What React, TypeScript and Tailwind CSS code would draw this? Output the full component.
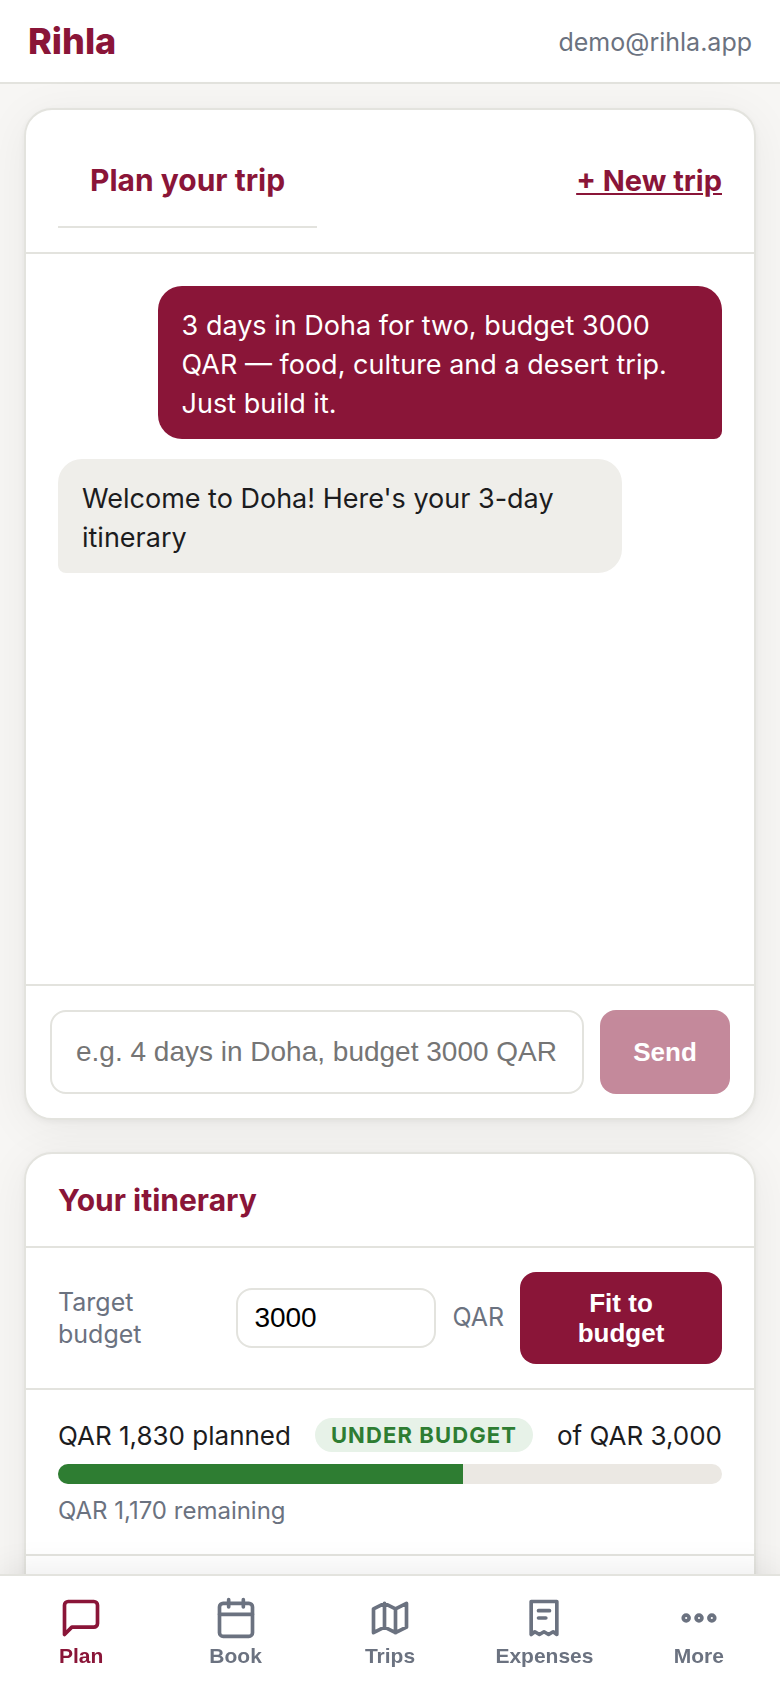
import { useState } from "react";
import type { ReactNode } from "react";

interface Message {
  id: number;
  role: "user" | "assistant";
  text: string;
}

interface Tab {
  id: string;
  label: string;
  icon: ReactNode;
}

const MESSAGES: Message[] = [
  {
    id: 1,
    role: "user",
    text: "3 days in Doha for two, budget 3000 QAR — food, culture and a desert trip. Just build it.",
  },
  { id: 2, role: "assistant", text: "Welcome to Doha! Here's your 3-day itinerary" },
];

const TABS: Tab[] = [
  {
    id: "plan",
    label: "Plan",
    icon: <path d="M21 15a2 2 0 0 1-2 2H7l-4 4V5a2 2 0 0 1 2-2h14a2 2 0 0 1 2 2z" />,
  },
  {
    id: "book",
    label: "Book",
    icon: (
      <>
        <rect x="3" y="4" width="18" height="18" rx="2" />
        <path d="M16 2v4M8 2v4M3 10h18" />
      </>
    ),
  },
  {
    id: "trips",
    label: "Trips",
    icon: <path d="M9 4 3 7v13l6-3 6 3 6-3V4l-6 3-6-3zM9 4v13M15 7v13" />,
  },
  {
    id: "expenses",
    label: "Expenses",
    icon: (
      <path d="M5 3h14v18l-2-1.5-2.5 1.5-2.5-1.5-2.5 1.5L7 19.5 5 21zM9 8h6M9 12h4" />
    ),
  },
  {
    id: "more",
    label: "More",
    icon: (
      <>
        <circle cx="5" cy="12" r="1.6" />
        <circle cx="12" cy="12" r="1.6" />
        <circle cx="19" cy="12" r="1.6" />
      </>
    ),
  },
];

const cardCls =
  "overflow-hidden rounded-[28px] border-2 border-[#e3e3de] bg-white shadow-[0_2px_6px_rgba(0,0,0,0.05),0_8px_48px_rgba(0,0,0,0.06)]";

function Bubble({ message }: { message: Message }) {
  const side =
    message.role === "user"
      ? "self-end rounded-br-lg bg-[#8a1538] text-white"
      : "self-start rounded-bl-lg bg-[#efeeea] text-[#1c1c1e]";
  return (
    <p className={`max-w-[85%] rounded-3xl px-6 pt-5 pb-4 text-[27px] leading-[39px] ${side}`}>
      {message.text}
    </p>
  );
}

function ChatCard() {
  const [draft, setDraft] = useState("");

  return (
    <section className={cardCls}>
      <div className="flex items-center justify-between border-b-2 border-[#e3e3de] px-8 py-6 leading-[44px]">
        <h2 className="border-b-2 border-[#e3e3de] px-8 py-6 text-[30px] font-bold text-[#8a1538]">
          Plan your trip
        </h2>
        <button type="button" className="text-[29px] font-bold text-[#8a1538] underline">
          + New trip
        </button>
      </div>
      <div className="flex min-h-[730px] flex-col gap-5 p-8">
        {MESSAGES.map((m) => (
          <Bubble key={m.id} message={m} />
        ))}
      </div>
      <form
        className="flex gap-4 border-t-2 border-[#e3e3de] p-6 font-['Liberation_Sans',sans-serif]"
        onSubmit={(e) => e.preventDefault()}
      >
        <input
          type="text"
          aria-label="Message"
          placeholder="e.g. 4 days in Doha, budget 3000 QAR"
          value={draft}
          onChange={(e) => setDraft(e.target.value)}
          className="h-[84px] min-w-0 flex-1 rounded-2xl border-2 border-[#e3e3de] px-6 text-[28px] placeholder:text-[#757575]"
        />
        <button
          type="submit"
          disabled={!draft.trim()}
          className="w-[130px] shrink-0 rounded-2xl bg-[#8a1538] text-[26px] font-bold text-white disabled:opacity-50"
        >
          Send
        </button>
      </form>
    </section>
  );
}

function ItineraryCard() {
  const [target, setTarget] = useState("3000");
  const planned = 1830;
  const total = 3000;

  return (
    <section className={cardCls}>
      <h2 className="border-b-2 border-[#e3e3de] px-8 py-6 text-[30px] leading-[44px] font-bold text-[#8a1538]">
        Your itinerary
      </h2>
      <div className="flex items-center gap-4 border-b-2 border-[#e3e3de] px-8 py-6 text-[#6b7280]">
        <label htmlFor="target-budget" className="flex-1 pr-12 text-[25px] leading-8">
          Target budget
        </label>
        <input
          id="target-budget"
          type="text"
          inputMode="numeric"
          value={target}
          onChange={(e) => setTarget(e.target.value)}
          className="h-[60px] w-[200px] rounded-2xl border-2 border-[#e3e3de] px-4 font-['Liberation_Sans',sans-serif] text-[28px] text-black"
        />
        <span className="text-[25px]">QAR</span>
        <button
          type="button"
          className="w-[202px] rounded-2xl bg-[#8a1538] px-10 py-4 font-['Liberation_Sans',sans-serif] text-[26px] leading-[30px] font-bold text-white"
        >
          Fit to budget
        </button>
      </div>
      <div className="border-b-2 border-[#e3e3de] px-8 py-6">
        <div className="mb-2 flex h-[42px] items-center justify-between text-[26px] text-[#1c1c1e]">
          <span>QAR 1,830 planned</span>
          <span className="rounded-full bg-[#e7f2e8] px-4 text-[22px] leading-[34px] font-bold tracking-wider text-[#2e7d32] uppercase">
            Under budget
          </span>
          <span>of QAR 3,000</span>
        </div>
        <div className="h-5 overflow-hidden rounded-full bg-[#ebe8e3]">
          <div className="h-full bg-[#2e7d32]" style={{ width: `${(planned / total) * 100}%` }} />
        </div>
        <p className="mt-2 text-2xl leading-[38px] text-[#6b7280]">QAR 1,170 remaining</p>
      </div>
      <div className="h-40" />
    </section>
  );
}

function BottomNav() {
  const [active, setActive] = useState("plan");

  return (
    <nav className="fixed inset-x-0 bottom-0 flex h-[114px] border-t-2 border-[#e3e3de] bg-white px-1 pt-5 font-['Liberation_Sans',sans-serif] shadow-[0_-4px_32px_rgba(0,0,0,0.08)]">
      {TABS.map((tab) => (
        <button
          key={tab.id}
          type="button"
          onClick={() => setActive(tab.id)}
          className={`flex flex-1 flex-col items-center gap-1 text-[21px] leading-6 font-bold ${
            active === tab.id ? "text-[#8a1538]" : "text-[#6b7280]"
          }`}
        >
          <svg
            viewBox="0 0 24 24"
            className="size-11"
            fill="none"
            stroke="currentColor"
            strokeWidth="2"
            strokeLinecap="round"
            strokeLinejoin="round"
            aria-hidden="true"
          >
            {tab.icon}
          </svg>
          {tab.label}
        </button>
      ))}
    </nav>
  );
}

export default function App() {
  return (
    <div className="h-screen overflow-hidden bg-[#f7f6f4] font-['Inter',sans-serif]">
      <header className="flex h-[84px] items-center justify-between border-b-2 border-[#e3e3de] bg-white px-7">
        <h1 className="text-[36px] font-extrabold text-[#8a1538]">Rihla</h1>
        <span className="pt-1 text-[25px] text-[#6b7280]">demo@rihla.app</span>
      </header>
      <main className="flex flex-col gap-8 p-6">
        <ChatCard />
        <ItineraryCard />
      </main>
      <BottomNav />
    </div>
  );
}
